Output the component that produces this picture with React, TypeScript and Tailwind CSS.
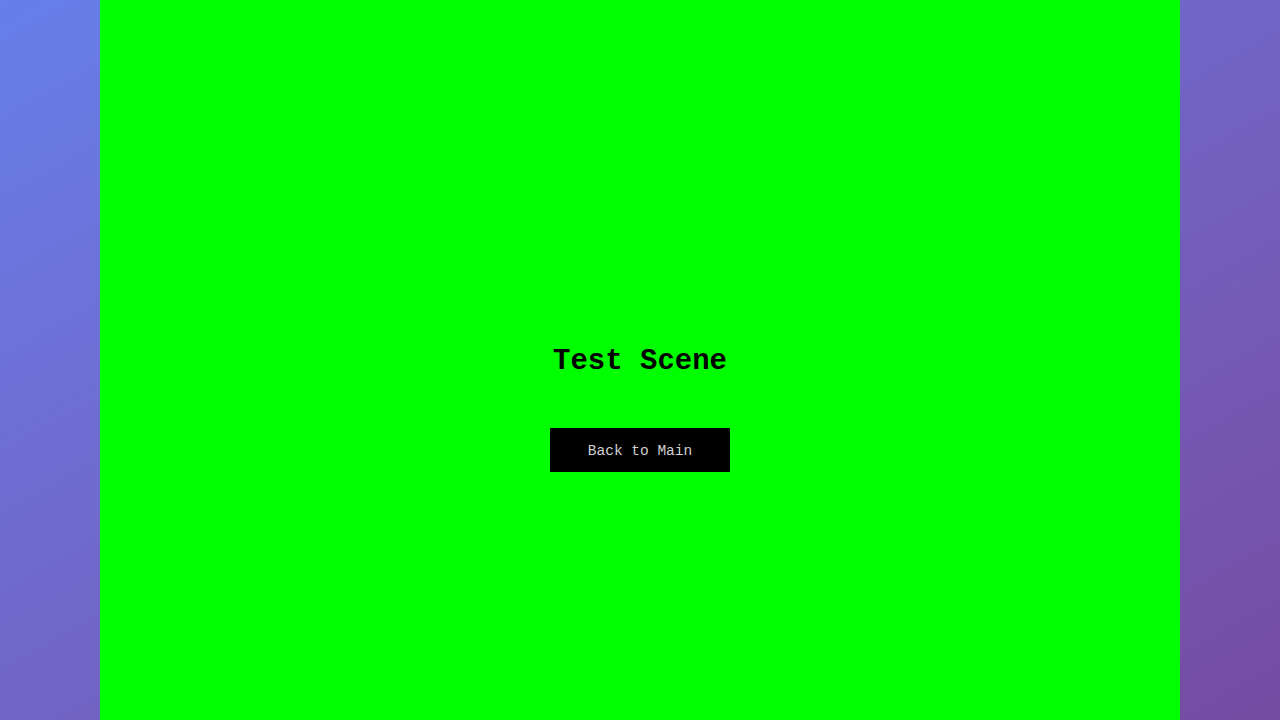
const mono = { fontFamily: 'Courier, "Liberation Mono", "Courier New", monospace' };

const App = () => {
  return (
    <div className="h-[720px] w-full bg-gradient-to-br from-[#667eea] to-[#764ba2] flex justify-center overflow-hidden">
      {/* Scene */}
      <div className="w-[1080px] h-full bg-[#00ff00] flex flex-col items-center justify-center pt-[96px]">
        <h1 className="text-[29px] leading-[36px] font-bold text-black mb-[48px]" style={mono}>
          Test Scene
        </h1>
        <button className="w-[180px] h-[44px] pt-[3px] bg-black text-[#d0d0d0] text-[14.5px]" style={mono}>
          Back to Main
        </button>
      </div>
    </div>
  );
};

export default App;
